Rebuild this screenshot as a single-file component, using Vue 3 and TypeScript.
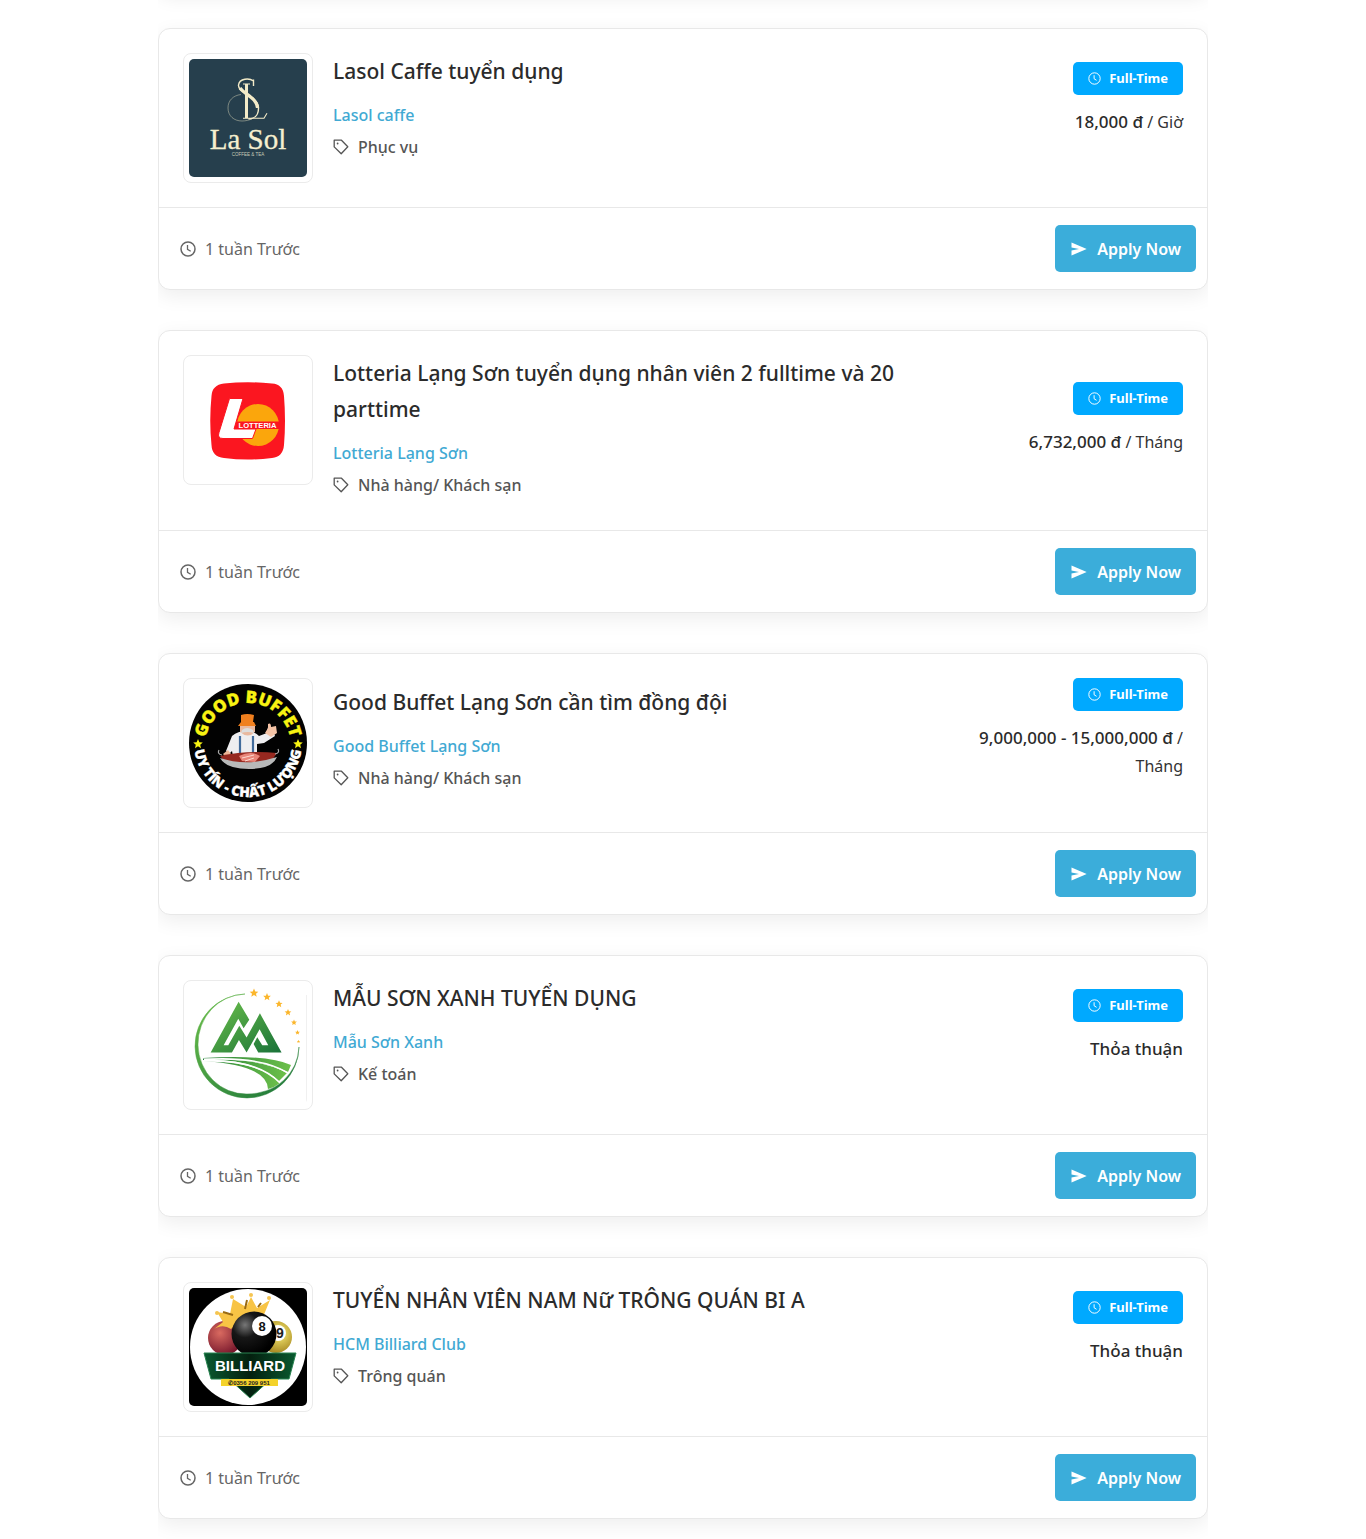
<script setup lang="ts">
type Logo = 'lasol' | 'lotteria' | 'buffet' | 'mauson' | 'billiard'

interface Job {
  id: number
  logo: Logo
  title: string
  company: string
  category: string
  salary: string
  unit?: string
  posted: string
}

const jobs: Job[] = [
  { id: 1, logo: 'lasol', title: 'Lasol Caffe tuyển dụng', company: 'Lasol caffe', category: 'Phục vụ', salary: '18,000 đ', unit: 'Giờ', posted: '1 tuần Trước' },
  { id: 2, logo: 'lotteria', title: 'Lotteria Lạng Sơn tuyển dụng nhân viên 2 fulltime và 20 parttime', company: 'Lotteria Lạng Sơn', category: 'Nhà hàng/ Khách sạn', salary: '6,732,000 đ', unit: 'Tháng', posted: '1 tuần Trước' },
  { id: 3, logo: 'buffet', title: 'Good Buffet Lạng Sơn cần tìm đồng đội', company: 'Good Buffet Lạng Sơn', category: 'Nhà hàng/ Khách sạn', salary: '9,000,000 - 15,000,000 đ', unit: 'Tháng', posted: '1 tuần Trước' },
  { id: 4, logo: 'mauson', title: 'MẪU SƠN XANH TUYỂN DỤNG', company: 'Mẫu Sơn Xanh', category: 'Kế toán', salary: 'Thỏa thuận', posted: '1 tuần Trước' },
  { id: 5, logo: 'billiard', title: 'TUYỂN NHÂN VIÊN NAM Nữ TRÔNG QUÁN BI A', company: 'HCM Billiard Club', category: 'Trông quán', salary: 'Thỏa thuận', posted: '1 tuần Trước' },
]

const star = '0,-5 1.4,-1.7 4.8,-1.5 2.2,0.8 3,4.2 0,2.3 -3,4.2 -2.2,0.8 -4.8,-1.5 -1.4,-1.7'

const risingStars = [
  { x: 65, y: 7, s: 0.9 },
  { x: 78, y: 11, s: 0.8 },
  { x: 90, y: 18, s: 0.75 },
  { x: 99, y: 26.5, s: 0.7 },
  { x: 105, y: 36.5, s: 0.6 },
  { x: 108.5, y: 46.5, s: 0.5 },
  { x: 109.5, y: 55.5, s: 0.35 },
]
</script>

<template>
  <main class="list">
    <article v-for="job in jobs" :key="job.id" class="card">
      <div class="body">
        <div class="logo">
          <svg v-if="job.logo === 'lasol'" viewBox="0 0 118 118" role="img" aria-label="La Sol">
            <rect width="118" height="118" fill="#263f4d" />
            <g fill="none" stroke="#f3ebc8">
              <path d="M52 35.500c-8 1-13 6-13 13.500 0 8 6 13 14 13 4 0 7-1 10-2" stroke-width="0.600" opacity="0.700" />
              <path d="M57.500 25v34" stroke-width="3" />
              <path d="M54 25h7M54 59.200h21l3-5" stroke-width="1.100" />
              <path d="M64.500 27v-6.500M64.500 22c-4-3-14-3-15 4-1 8 20 11 20 23 0 7-4 11-10 11" stroke-width="1.400" />
              <path d="M51 29c4 6 17 10 17.500 20" stroke-width="3.200" />
            </g>
            <text x="59" y="89.500" text-anchor="middle" font-family="'Liberation Serif', serif" font-size="29" fill="#f6efcf" stroke="#f6efcf" stroke-width="0.300">La Sol</text>
            <text x="59" y="96.500" text-anchor="middle" font-family="'Liberation Sans', sans-serif" font-size="4.500" fill="#c9ccb8">COFFEE &amp; TEA</text>
          </svg>

          <svg v-else-if="job.logo === 'lotteria'" viewBox="0 0 118 118" role="img" aria-label="Lotteria">
            <path d="M35 22.500Q59 20 83 22.500Q94 23 95 35Q97 60 95 84Q94 96 83 97Q59 100 35 97Q23 96 22.500 84Q20 60 22.500 35Q23 24 35 22.500Z" fill="#fb1620" />
            <circle cx="69" cy="64" r="21" fill="#fba60c" />
            <path d="M48 60.500h42v7.500H48z" fill="#fb1620" />
            <path d="M40.500 37.500H54L45 68h22l-3.500 9.500H34q-6 0-4-6z" fill="#fff" stroke="#fb1620" stroke-width="1" />
            <text x="49.500" y="67" font-family="'Liberation Sans', sans-serif" font-weight="700" font-size="7.600" fill="#fff">LOTTERIA</text>
          </svg>

          <svg v-else-if="job.logo === 'buffet'" viewBox="0 0 118 118" role="img" aria-label="Good Buffet">
            <defs>
              <path id="buffet-top" d="M16 62a43 43 0 0 1 86 0" />
              <path id="buffet-bottom" d="M5 59a54 54 0 0 0 108 0" />
            </defs>
            <circle cx="59" cy="59" r="59" fill="#020202" />
            <text font-family="'Open Sans', sans-serif" font-weight="800" font-size="17" fill="#f8f312" stroke="#f8f312" stroke-width="0.300" text-anchor="middle">
              <textPath href="#buffet-top" startOffset="50%">GOOD BUFFET</textPath>
            </text>
            <text font-family="'Open Sans', sans-serif" font-weight="800" font-size="13.800" fill="#fff" stroke="#fff" stroke-width="0.300" text-anchor="middle">
              <textPath href="#buffet-bottom" startOffset="50%">UY TÍN - CHẤT LƯỢNG</textPath>
            </text>
            <polygon :points="star" transform="translate(9 60)" fill="#f8f312" />
            <polygon :points="star" transform="translate(109 60)" fill="#f8f312" />
            <path d="M43 52q6-5 14-5t13 5l8-3 1-6 4 1 3 8-11 7-7 1v17H45l-2-10-3 3-3-3z" fill="#eeeef0" />
            <path d="M39 66l6 8-4 4-7-8z" fill="#eeb697" />
            <path d="M76 49l3-5v-4q3-2 3 3l5-1 1 7-6 4z" fill="#f4c3a6" />
            <path d="M51 40h15v8q-7 7-15 0z" fill="#e9b99f" />
            <path d="M52 31q6-2 13 0l-1 7h1l2 4H49l3-4z" fill="#f0801f" />
            <path d="M53 46q5-4 11 0l1 3q-6-2-13 0z" fill="#ddd" />
            <path d="M51 52v22M64 52v22" stroke="#416b9b" stroke-width="2.200" />
            <path d="M31 72q28-6 57-3l-7 10q-20 8-44 0z" fill="#962920" />
            <path d="M50 72q12-6 21 0l-5 6-13-1z" fill="#e98579" />
            <path d="M53 74l12-3M56 77l9-3" stroke="#fbd8cf" stroke-width="1" />
            <path d="M31 74q27 9 57-1-5 12-28 12T31 74z" fill="#b8b9b9" />
            <path d="M33 71q-5-1-3-5M86 70q5-1 3-5" fill="none" stroke="#aaa" stroke-width="1.200" />
          </svg>

          <svg v-else-if="job.logo === 'mauson'" viewBox="0 0 118 118" role="img" aria-label="Mẫu Sơn Xanh">
            <defs>
              <linearGradient id="peak" x1="0" y1="0" x2="1" y2="1">
                <stop offset="0" stop-color="#6cc04a" />
                <stop offset="1" stop-color="#197239" />
              </linearGradient>
              <linearGradient id="field" x1="0" y1="0" x2="1" y2="0">
                <stop offset="0" stop-color="#27803a" />
                <stop offset="1" stop-color="#6cc04a" />
              </linearGradient>
            </defs>
            <path d="M56 8A52 52 0 1 0 110 61A51 48 0 0 1 58 108A48 50 0 0 1 56 8Z" fill="url(#peak)" stroke="url(#peak)" stroke-width="0.500" />
            <path transform="scale(0.333) translate(-18 -18)" d="M83 218L167 65 199 119 182 145 166 116 122 196H136L169 137 191 173 231 100 296 218H226L212 192 223 172 238 196H256L230 148 191 218 168 180 147 218Z" fill="url(#peak)" />
            <path d="M14 72Q78 68 102 79l-3 7Q68 72 14 72.500z" fill="url(#field)" />
            <path d="M14 73Q72 72 98 87l-8 8Q64 72 14 74z" fill="url(#field)" />
            <path d="M14 75Q70 75 91 97q-5 4-12 6-1-24-65-28z" fill="url(#field)" />
            <path d="M15 73.500Q72 70 99 87M15 75Q68 73 91 97" fill="none" stroke="#fff" stroke-width="1.600" />
            <polygon v-for="(s, i) in risingStars" :key="i" :points="star" :transform="`translate(${s.x} ${s.y}) scale(${s.s})`" fill="#fbb62c" />
            <path d="M117.500 9v109" stroke="#f0f0f0" />
          </svg>

          <svg v-else viewBox="0 0 118 118" role="img" aria-label="Billiard">
            <defs>
              <radialGradient id="ball-red" cx="0.35" cy="0.35" r="0.7">
                <stop offset="0" stop-color="#d96a60" />
                <stop offset="1" stop-color="#75152b" />
              </radialGradient>
              <radialGradient id="ball-black" cx="0.3" cy="0.3" r="0.7">
                <stop offset="0" stop-color="#777" />
                <stop offset="0.4" stop-color="#171717" />
                <stop offset="1" stop-color="#000" />
              </radialGradient>
              <radialGradient id="ball-yellow" cx="0.6" cy="0.4" r="0.7">
                <stop offset="0" stop-color="#f9ed74" />
                <stop offset="1" stop-color="#9b7a16" />
              </radialGradient>
              <linearGradient id="banner" x1="0" y1="0" x2="1" y2="0">
                <stop offset="0" stop-color="#0a5a30" />
                <stop offset="0.5" stop-color="#04200f" />
                <stop offset="1" stop-color="#0a5a30" />
              </linearGradient>
            </defs>
            <rect width="118" height="118" fill="#000" />
            <circle cx="59" cy="59" r="58" fill="#fff" />
            <circle cx="36" cy="50" r="17" fill="url(#ball-red)" />
            <circle cx="87" cy="49" r="16" fill="url(#ball-yellow)" />
            <circle cx="89" cy="45" r="8" fill="#fff" />
            <text x="91" y="50" text-anchor="middle" font-family="'Liberation Sans', sans-serif" font-weight="700" font-size="14" fill="#222">9</text>
            <path d="M24 42L34 34 28 24l13 2 3-15 13 8 5-10 6 11 13-8-7 17q-18-3-32 12-9-6-18 1z" fill="#f8c445" />
            <path d="M34 24l10 3M58 12l-2 9M69 19l3-4" stroke="#9a6b13" stroke-width="2" />
            <circle cx="43" cy="9" r="2" fill="#f5c551" />
            <circle cx="62" cy="7" r="2" fill="#f5c551" />
            <circle cx="80" cy="10" r="2" fill="#f5c551" />
            <circle cx="28" cy="25" r="2" fill="#f5c551" />
            <circle cx="65" cy="46" r="22.500" fill="url(#ball-black)" />
            <circle cx="73" cy="38" r="10" fill="#fff" />
            <text x="73" y="43" text-anchor="middle" font-family="'Liberation Sans', sans-serif" font-weight="700" font-size="13" fill="#111">8</text>
            <path d="M15 65h92l-7 26H82l-21 19-21-19H22z" fill="url(#banner)" stroke="#298351" stroke-width="1" />
            <text x="61" y="83" text-anchor="middle" font-family="'Liberation Sans', sans-serif" font-weight="700" font-size="15" fill="#fff">BILLIARD</text>
            <path d="M32 91h57v7H32z" fill="#f4d22a" />
            <text x="60" y="97" text-anchor="middle" font-family="'Liberation Sans', sans-serif" font-weight="700" font-size="6" fill="#222">✆0356 209 951</text>
          </svg>
        </div>

        <div class="row">
          <div class="info">
            <h2 class="title">{{ job.title }}</h2>
            <a class="company" href="#">{{ job.company }}</a>
            <div class="category">
              <svg class="tag" viewBox="0 0 16 16" aria-hidden="true">
                <path d="M1.200 1.200h7.300l6.300 6.500-6.600 7-7-6.800z" fill="none" stroke="currentColor" stroke-width="1.300" stroke-linejoin="round" />
                <circle cx="4.600" cy="4.500" r="0.900" fill="currentColor" />
              </svg>
              <span>{{ job.category }}</span>
            </div>
          </div>
          <div class="offer">
            <span class="badge">
              <svg class="clock-small" viewBox="0 0 16 16" aria-hidden="true">
                <circle cx="8" cy="8" r="7" fill="none" stroke="currentColor" stroke-width="1.200" />
                <path d="M7.500 4v4.300l3 1.900" fill="none" stroke="currentColor" stroke-width="1.200" />
              </svg>
              Full-Time
            </span>
            <p class="salary">
              <strong>{{ job.salary }}</strong>
              <template v-if="job.unit"><span>{{ ' / ' }}</span><span>{{ job.unit }}</span></template>
            </p>
          </div>
        </div>
      </div>

      <footer class="foot">
        <span class="posted">
          <svg class="clock" viewBox="0 0 16 16" aria-hidden="true">
            <circle cx="8" cy="8" r="7" fill="none" stroke="currentColor" stroke-width="1.500" />
            <path d="M7.500 4v4.300l3.200 1.900" fill="none" stroke="currentColor" stroke-width="1.300" />
          </svg>
          {{ job.posted }}
        </span>
        <button class="apply" type="button">
          <svg class="send" viewBox="0 0 16 14" aria-hidden="true">
            <path d="M0.500 0.500L15.700 7 0.500 13.500V8.600L8 7 0.500 5.400z" fill="currentColor" />
          </svg>
          Apply Now
        </button>
      </footer>
    </article>
  </main>
</template>

<style>
body {
  margin: 0;
  background: #fff;
}
</style>

<style scoped>
.list {
  display: flex;
  flex-direction: column;
  gap: 40px;
  max-width: 1050px;
  margin: 0 auto;
  padding-bottom: 20px;
  overflow: hidden;
  font-family: 'Noto Sans', 'Open Sans', sans-serif;
  font-size: 16px;
  line-height: 28px;
  color: #333;
}

/* Lower edge of the card that sits above the visible part of the list */
.list::before {
  content: '';
  height: 40px;
  margin-top: -52px;
  border-radius: 12px;
  box-shadow: 0 8px 20px rgba(0, 0, 0, 0.09);
}

.card {
  border: 1px solid #e8e8e8;
  border-radius: 12px;
  background: #fff;
  box-shadow: 0 6px 20px rgba(0, 0, 0, 0.07);
}

.body {
  display: flex;
  align-items: flex-start;
  gap: 20px;
  padding: 24px;
}

.logo {
  box-sizing: border-box;
  flex: none;
  width: 130px;
  height: 130px;
  padding: 5px;
  border: 1px solid #ebebeb;
  border-radius: 8px;
}

.logo svg {
  display: block;
  width: 100%;
  height: 100%;
  border-radius: 5px;
}

.row {
  display: flex;
  flex: 1;
  align-items: center;
  min-width: 0;
}

.info {
  flex: 1;
  min-width: 0;
  padding-bottom: 7px;
}

.title {
  margin: 0 0 12px;
  font-size: 21px;
  font-weight: 500;
  line-height: 36px;
  color: #2b2b2b;
}

.company {
  display: block;
  width: fit-content;
  margin-bottom: 4px;
  font-weight: 500;
  font-size: 16px;
  color: #41a9d3;
  text-decoration: none;
}

.category {
  display: flex;
  align-items: center;
  gap: 9px;
  font-weight: 500;
  font-size: 16px;
  color: #555;
}

.tag {
  width: 16px;
  height: 16px;
}

.offer {
  flex: none;
  display: flex;
  flex-direction: column;
  align-items: flex-end;
  width: 220px;
  padding-bottom: 24px;
  text-align: right;
}

.badge {
  display: flex;
  align-items: center;
  gap: 8px;
  margin-bottom: 13px;
  padding: 0 15px;
  border-radius: 5px;
  background: #00a9ff;
  color: #fff;
  font-size: 13px;
  font-weight: 700;
  line-height: 33px;
}

.clock-small {
  width: 13px;
  height: 13px;
}

.salary {
  margin: 0;
  font-size: 16px;
}

.salary strong {
  font-size: 17px;
  font-weight: 500;
  color: #2b2b2b;
}

.foot {
  display: flex;
  align-items: center;
  justify-content: space-between;
  padding: 17px 11px 17px 21px;
  border-top: 1px solid #e8e8e8;
}

.posted {
  display: flex;
  align-items: center;
  gap: 9px;
  color: #666;
}

.clock {
  width: 16px;
  height: 16px;
}

.apply {
  display: flex;
  align-items: center;
  gap: 10px;
  height: 47px;
  padding: 0 15px 0 16px;
  border: 0;
  border-radius: 5px;
  background: #3badda;
  color: #fff;
  font: inherit;
  font-weight: 600;
  cursor: pointer;
}

.send {
  width: 16px;
  height: 14px;
}
</style>
